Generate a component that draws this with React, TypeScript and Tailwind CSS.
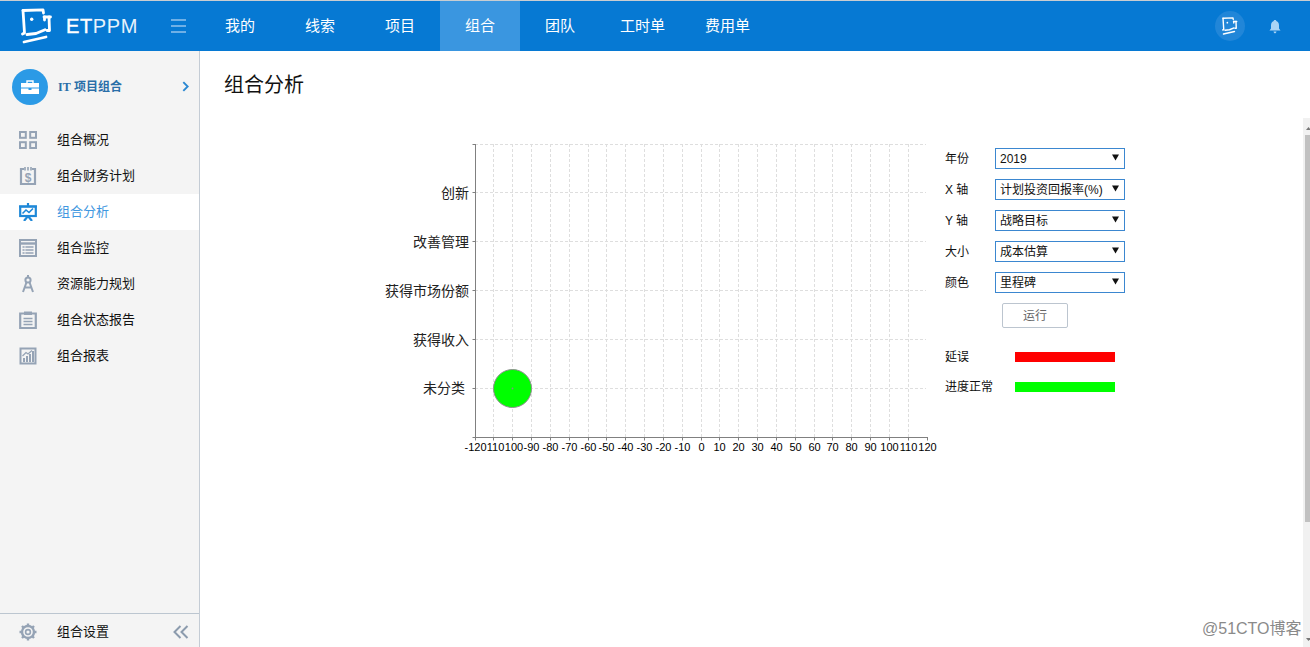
import React from "react";

const FONT = "font-['Liberation_Sans','Noto_Sans_CJK_SC',sans-serif]";

function Logo({ className }: { className?: string }) {
  return (
    <svg viewBox="0 0 36 38" className={className} fill="none" stroke="white" strokeWidth="2.8" strokeLinecap="round" strokeLinejoin="round">
      <path d="M4 2.5 L24 1.8 L24.5 5" />
      <path d="M4 2.5 L5.5 25 L3.5 26" />
      <path d="M25 9 L31.5 9" />
      <path d="M25.5 9 L25.5 12" />
      <path d="M30 9 L30.5 22.5 L28 22.5" />
      <path d="M8 26.5 L17 25.5 L26 21.8" />
      <path d="M5 34 L27 29" />
      <circle cx="12.7" cy="11.3" r="1.7" fill="white" stroke="none" />
    </svg>
  );
}

const C = "#95a3b5";

const icons: Record<string, React.ReactNode> = {
  grid: (
    <g fill="none" stroke={C} strokeWidth="2">
      <rect x="1" y="1" width="5.8" height="5.8" />
      <rect x="11.2" y="1" width="5.8" height="5.8" />
      <rect x="1" y="11.2" width="5.8" height="5.8" />
      <rect x="11.2" y="11.2" width="5.8" height="5.8" />
    </g>
  ),
  money: (
    <g>
      <path d="M5 2 H2 V17 H16 V2 H13" fill="none" stroke={C} strokeWidth="2.2" />
      <path d="M6 0 V3.5 M9 0 V3.5 M12 0 V3.5" stroke={C} strokeWidth="1.6" />
      <text x="9" y="14.5" textAnchor="middle" fontSize="12" fontWeight="700" fill={C} fontFamily="Liberation Sans">$</text>
    </g>
  ),
  board: (
    <g fill="none" stroke="#1e88d8" strokeWidth="2.2">
      <rect x="1.2" y="3.5" width="15.6" height="9.5" />
      <path d="M0 3.5 H18 M9 0 V3 M9 13 L5 18 M9 13 L13 18" />
      <path d="M3.5 10.5 L7 7 L10 9.5 L14 5.5" strokeWidth="1.6" />
    </g>
  ),
  table: (
    <g>
      <rect x="1" y="1" width="16" height="16" fill="none" stroke={C} strokeWidth="2" />
      <path d="M1 4.5 H17" stroke={C} strokeWidth="2.4" />
      <path d="M3.5 8 H14.5 M3.5 11 H14.5 M3.5 14 H14.5" stroke={C} strokeWidth="1.5" />
      <path d="M6 6.5 V15.5" stroke="#f4f4f4" strokeWidth="0.8" />
    </g>
  ),
  compass: (
    <g fill="none" stroke={C} strokeWidth="2">
      <circle cx="9" cy="5" r="2.6" />
      <path d="M9 0 V2.5 M7.6 7 L4 17 M10.4 7 L14 17 M5.2 12.5 H12.8" />
    </g>
  ),
  report: (
    <g fill="none" stroke={C}>
      <path d="M5 2.5 H1.2 V17 H16.8 V2.5 H13" strokeWidth="2.2" />
      <rect x="5" y="0.5" width="8" height="3.5" fill={C} stroke="none" />
      <path d="M4.5 7.5 H13.5 M4.5 10.5 H13.5 M4.5 13.5 H13.5" strokeWidth="1.6" />
    </g>
  ),
  chart: (
    <g>
      <rect x="1.5" y="1.5" width="15" height="15" fill="none" stroke={C} strokeWidth="2" />
      <path d="M5 15 V11 M8 15 V9 M11 15 V7 M14 15 V4" stroke={C} strokeWidth="2" />
      <path d="M3.5 9 L7 5.5 L9 7 L13 3.5" fill="none" stroke={C} strokeWidth="1.3" />
    </g>
  ),
};

const items = [
  { label: "组合概况", icon: "grid" },
  { label: "组合财务计划", icon: "money" },
  { label: "组合分析", icon: "board", active: true },
  { label: "组合监控", icon: "table" },
  { label: "资源能力规划", icon: "compass" },
  { label: "组合状态报告", icon: "report" },
  { label: "组合报表", icon: "chart" },
];

const tabs = [
  { label: "我的", w: "w-[80px]" },
  { label: "线索", w: "w-[80px]" },
  { label: "项目", w: "w-[80px]" },
  { label: "组合", w: "w-[80px]", active: true },
  { label: "团队", w: "w-[80px]" },
  { label: "工时单", w: "w-[85px]" },
  { label: "费用单", w: "w-[85px]" },
];

const fields = [
  { label: "年份", value: "2019" },
  { label: "X 轴", value: "计划投资回报率(%)" },
  { label: "Y 轴", value: "战略目标" },
  { label: "大小", value: "成本估算" },
  { label: "颜色", value: "里程碑" },
];

const vLines = [493.5, 512.5, 531.5, 550.5, 569.5, 588.5, 606.5, 625.5, 644.5, 663.5, 682.5, 701.5, 719.5, 738.5, 757.5, 776.5, 795.5, 814.5, 832.5, 851.5, 870.5, 889.5, 908.5];
const hLines = [144.5, 192.5, 241.5, 290.5, 339.5, 388.5];
const xTicks = [475.5, ...vLines, 927.5];
// The two labels after -120 read without their minus sign in the picture, which they lose to the crowding.
const xLabels = ["-120", "110", "100", "-90", "-80", "-70", "-60", "-50", "-40", "-30", "-20", "-10", "0", "10", "20", "30", "40", "50", "60", "70", "80", "90", "100", "110", "120"];
const labelShift: Record<number, number> = { 1: 2, 2: 1.5 };
const yLabels = [
  { t: "创新", x: 469, y: 193 },
  { t: "改善管理", x: 469, y: 242 },
  { t: "获得市场份额", x: 469, y: 291 },
  { t: "获得收入", x: 469, y: 340 },
  { t: "未分类", x: 465, y: 388 },
];

function Chart() {
  return (
    <svg viewBox="380 130 555 330" className="w-[555px] h-[330px] shrink-0 overflow-visible">
      {hLines.map((y) => (
        <line key={y} x1="475" x2="926" y1={y} y2={y} stroke="#dedede" strokeDasharray="3 2" />
      ))}
      {vLines.map((x) => (
        <line key={x} x1={x} x2={x} y1="144" y2="437" stroke="#dedede" strokeDasharray="3 2" />
      ))}
      <line x1="475.5" x2="475.5" y1="144" y2="437.5" stroke="#808080" />
      <line x1="475" x2="928" y1="437.5" y2="437.5" stroke="#808080" />
      {[...hLines, 437.5].map((y) => (
        <line key={y} x1="472.5" x2="475" y1={y} y2={y} stroke="#808080" />
      ))}
      {xTicks.map((x) => (
        <line key={x} x1={x} x2={x} y1="437" y2="440.5" stroke="#808080" />
      ))}
      <circle cx="512.5" cy="388.5" r="19" fill="#00ff00" stroke="#8f8f8f" />
      <circle cx="512.5" cy="388.5" r="0.9" fill="#8a8a8a" />
      {xTicks.map((x, i) => (
        <text key={x} x={x + (labelShift[i] ?? 0)} y="451" textAnchor="middle" fontSize="11" fill="#000" fontFamily="Liberation Sans">
          {xLabels[i]}
        </text>
      ))}
      {yLabels.map((l) => (
        <text key={l.t} x={l.x} y={l.y + 5} textAnchor="end" fontSize="14" fill="#222" fontFamily="Liberation Serif, Noto Sans CJK SC, serif">
          {l.t}
        </text>
      ))}
    </svg>
  );
}

export default function App() {
  return (
    <div className={`h-screen w-full overflow-hidden flex flex-col bg-white relative ${FONT}`}>
      <div className="h-px bg-[#c9cdd1] shrink-0" />
      <header className="h-[50px] shrink-0 flex bg-[#0679d3] text-white">
        <div className="w-[200px] shrink-0 flex items-center">
          <Logo className="w-[36px] h-[38px] ml-[19px] mt-[2px] shrink-0" />
          <span className="ml-[11px] text-[20px] tracking-[0.6px] leading-none">
            <span className="[-webkit-text-stroke:0.4px_white]">ET</span>
            <span className="text-[#e6f2fb]">PPM</span>
          </span>
          <div className="ml-[33px] w-[15px] flex flex-col gap-[4px]">
            <div className="h-[2px] bg-[#6fb0e6]" />
            <div className="h-[2px] bg-[#6fb0e6]" />
            <div className="h-[2px] bg-[#6fb0e6]" />
          </div>
        </div>
        <nav className="flex">
          {tabs.map((t) => (
            <div key={t.label} className={`${t.w} flex items-center justify-center text-[15px] ${t.active ? "bg-[#3a96e0]" : ""}`}>
              {t.label}
            </div>
          ))}
        </nav>
        <div className="ml-auto flex items-center pr-[29px]">
          <div className="w-[30px] h-[30px] rounded-full bg-[#2186d8] flex items-center justify-center">
            <Logo className="w-[18px] h-[19px]" />
          </div>
          <svg viewBox="0 0 12 14" className="w-[12px] h-[15px] ml-[24px]" fill="#a9d4f5">
            <path d="M6 0.5 C7 0.5 7.2 1 7.3 1.6 C9.3 2.2 10 4 10 6 L10 9 L11.5 11 L0.5 11 L2 9 L2 6 C2 4 2.7 2.2 4.7 1.6 C4.8 1 5 0.5 6 0.5 Z M4.5 12 H7.5 C7.3 13.2 6.7 13.8 6 13.8 C5.3 13.8 4.7 13.2 4.5 12 Z" />
          </svg>
        </div>
      </header>

      <div className="flex-1 flex min-h-0">
        <aside className="w-[200px] shrink-0 bg-[#f4f4f4] border-r border-[#c4ccd5] flex flex-col">
          <div className="h-[71px] flex items-center pl-[12px] pr-[10px] shrink-0">
            <div className="w-[36px] h-[36px] rounded-full bg-[#2b9ae6] flex items-center justify-center">
              <svg viewBox="0 0 18 14" className="w-[18px] h-[14px]">
                <path d="M6 3 V1 H12 V3" fill="none" stroke="white" strokeWidth="1.4" />
                <path d="M0 3 H18 V7.5 H0 Z M0 8.5 H7.5 V10 H10.5 V8.5 H18 V14 H0 Z" fill="white" />
              </svg>
            </div>
            <span className="ml-[10px] text-[12px] font-bold text-[#2a6ea8]">
              <span className="font-['Liberation_Serif',serif]">IT</span> 项目组合
            </span>
            <svg viewBox="0 0 8 12" className="ml-auto w-[7px] h-[11px]" fill="none" stroke="#2b88d2" strokeWidth="2.2">
              <path d="M1.5 1 L6.5 6 L1.5 11" />
            </svg>
          </div>
          {items.map((it) => (
            <div key={it.label} className={`h-[36px] flex items-center pl-[19px] text-[13px] shrink-0 ${it.active ? "bg-white text-[#3f97e0]" : "text-[#111]"}`}>
              <svg viewBox="0 0 18 18" className="w-[18px] h-[18px] shrink-0">
                {icons[it.icon]}
              </svg>
              <span className="ml-[20px]">{it.label}</span>
            </div>
          ))}
          <div className="mt-auto h-[34px] border-t border-[#bcc6d0] flex items-center pt-[2px] pl-[19px] pr-[10px] text-[13px] text-[#111] shrink-0">
            <svg viewBox="0 0 18 18" className="w-[18px] h-[18px] shrink-0" fill="none" stroke={C}>
              <circle cx="9" cy="9" r="6" strokeWidth="2.4" />
              <circle cx="9" cy="9" r="2.4" strokeWidth="1.6" />
              <path d="M9 0.5 V3 M9 15 V17.5 M0.5 9 H3 M15 9 H17.5 M3 3 L4.8 4.8 M13.2 13.2 L15 15 M15 3 L13.2 4.8 M4.8 13.2 L3 15" strokeWidth="2.4" />
            </svg>
            <span className="ml-[20px]">组合设置</span>
            <svg viewBox="0 0 16 14" className="ml-auto w-[16px] h-[14px]" fill="none" stroke="#8c9bad" strokeWidth="2">
              <path d="M7.5 1 L1.5 7 L7.5 13 M14.5 1 L8.5 7 L14.5 13" />
            </svg>
          </div>
        </aside>

        <main className="flex-1 min-w-0 flex flex-col">
          <h1 className="pl-[24px] pt-[20px] text-[20px] leading-[28px] font-normal text-[#111]">组合分析</h1>
          <div className="flex mt-[31px] ml-[180px]">
            <Chart />
            <div className="ml-[10px] pt-[18px] text-[12px] text-[#111]">
              {fields.map((f) => (
                <div key={f.label} className="flex items-center h-[21px] mb-[10px]">
                  <span className="w-[50px]">{f.label}</span>
                  <div className="relative w-[130px] h-[21px]">
                    <select defaultValue={f.value} className="w-full h-full appearance-none border border-[#3b87d0] rounded-none bg-white pl-[4px] text-[12px] text-[#111] outline-none">
                      <option>{f.value}</option>
                    </select>
                    <svg viewBox="0 0 8 7" className="absolute right-[6px] top-[6px] w-[7px] h-[7px] pointer-events-none">
                      <path d="M0 0 H8 L4 7 Z" fill="#111" />
                    </svg>
                  </div>
                </div>
              ))}
              <button className="ml-[57px] w-[66px] h-[25px] border border-[#bcc5cf] rounded-[2px] bg-white text-[12px] text-[#666] block">运行</button>
              <div className="flex items-center h-[10px] mt-[24px]">
                <span className="w-[70px]">延误</span>
                <div className="w-[100px] h-[10px] bg-[#ff0000]" />
              </div>
              <div className="flex items-center h-[10px] mt-[20px]">
                <span className="w-[70px]">进度正常</span>
                <div className="w-[100px] h-[10px] bg-[#00ff00]" />
              </div>
            </div>
          </div>
        </main>
      </div>

      {/* page scrollbar lying over the content */}
      <div className="absolute right-0 top-[118px] bottom-0 w-[7px] bg-[#f1f1f1]">
        <div className="absolute left-[2px] right-0 top-[17px] h-[387px] bg-[#c1c1c1]" />
        <svg viewBox="0 0 5 3" className="absolute left-[3px] top-[9px] w-[5px] h-[3px]">
          <path d="M0 3 L2.5 0 L5 3 Z" fill="#777" />
        </svg>
        <svg viewBox="0 0 5 3" className="absolute left-[3px] bottom-[6px] w-[5px] h-[3px]">
          <path d="M0 0 L2.5 3 L5 0 Z" fill="#777" />
        </svg>
      </div>
      <div className="absolute left-[1202px] top-[619px] text-[16px] leading-[20px] text-[#8a8a8a]">@51CTO博客</div>
    </div>
  );
}
